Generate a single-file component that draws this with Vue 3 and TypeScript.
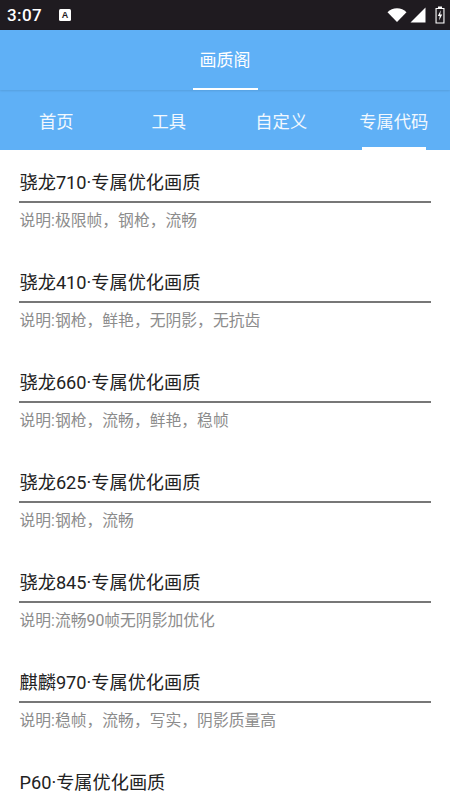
<script setup lang="ts">
const tabs: { label: string; active?: boolean }[] = [
  { label: '首页' },
  { label: '工具' },
  { label: '自定义' },
  { label: '专属代码', active: true },
]
const C = '\uFF0C'
const items = [
  { title: '骁龙710·专属优化画质', desc: ['说明:极限帧', '钢枪', '流畅'].join(C) },
  { title: '骁龙410·专属优化画质', desc: ['说明:钢枪', '鲜艳', '无阴影', '无抗齿'].join(C) },
  { title: '骁龙660·专属优化画质', desc: ['说明:钢枪', '流畅', '鲜艳', '稳帧'].join(C) },
  { title: '骁龙625·专属优化画质', desc: ['说明:钢枪', '流畅'].join(C) },
  { title: '骁龙845·专属优化画质', desc: '说明:流畅90帧无阴影加优化' },
  { title: '麒麟970·专属优化画质', desc: ['说明:稳帧', '流畅', '写实', '阴影质量高'].join(C) },
  { title: 'P60·专属优化画质', desc: '' },
]
</script>

<template>
  <div class="screen">
    <div class="status">
      <span class="time">3:07</span>
      <span class="note">A</span>
      <span class="spacer"></span>
      <svg class="wifi" width="20" height="16" viewBox="0 0 20 16"><path d="M0.5 5.2C3 2.6 6.3 1.2 10 1.2s7 1.4 9.5 4L10 15z" fill="#fff"/></svg>
      <svg class="signal" width="16" height="16" viewBox="0 0 16 16"><path d="M0.5 15.5L15.5 0.5V15.5z" fill="#fff"/></svg>
      <svg class="battery" width="10" height="18" viewBox="0 0 10 18"><path fill-rule="evenodd" d="M3 0.5h4v1.5h2.5v15.5H0.5V2H3zM1.6 3.1v13.3h6.8V3.1z" fill="#fff"/><path d="M5.8 4.2L2.8 10h1.9l-.6 4.4L7.2 8.4H5.2z" fill="#fff"/></svg>
    </div>
    <header class="appbar">
      <div class="app-title">画质阁</div>
    </header>
    <nav class="tabs">
      <div v-for="t in tabs" :key="t.label" class="tab">
        <span>{{ t.label }}</span>
        <i v-if="t.active" class="tab-line"></i>
      </div>
    </nav>
    <main class="list">
      <section v-for="it in items" :key="it.title" class="item">
        <h3 class="title">{{ it.title }}</h3>
        <p class="desc">{{ it.desc }}</p>
      </section>
    </main>
  </div>
</template>

<style>
html, body { margin: 0; background: #fff; overflow: hidden; }
</style>

<style scoped>
.screen {
  width: 450px;
  height: 800px;
  overflow: hidden;
  font-family: "Roboto", "Noto Sans CJK SC", sans-serif;
  background: #fff;
}
.status {
  height: 30px;
  background: #1f1b20;
  display: flex;
  align-items: center;
  padding: 0 5px 0 7px;
  box-sizing: border-box;
  color: #fff;
}
.time { font-size: 17px; font-weight: 500; letter-spacing: .4px; }
.note {
  width: 12px; height: 12px; margin-left: 17px;
  background: #fff; color: #1f1b20; border-radius: 1.5px;
  font: 700 9px/12px "Liberation Sans", sans-serif; text-align: center;
}
.spacer { flex: 1; }
.wifi { margin-right: 3px; }
.signal { margin-right: 9px; }
.appbar {
  height: 60px;
  background: #5fb0f6;
  box-sizing: border-box;
  display: flex;
  justify-content: center;
  box-shadow: 0 1px 2px rgba(0, 0, 0, .1);
  position: relative;
}
.app-title {
  width: 65px;
  height: 60px;
  box-sizing: border-box;
  border-bottom: 2px solid #fff;
  text-align: center;
  color: #fff;
  font-size: 17px;
  line-height: 61px;
}
.tabs {
  height: 60px;
  background: #5fb0f6;
  display: flex;
}
.tab {
  flex: 1;
  position: relative;
  display: flex;
  align-items: center;
  justify-content: center;
  color: #f2f8fe;
  font-size: 17.3px;
}
.tab-line {
  position: absolute;
  left: 50%;
  bottom: 0;
  width: 64px;
  height: 3px;
  margin-left: -32px;
  background: #fff;
}
.list { padding: 0 19px; }
.item { height: 100px; box-sizing: border-box; padding-top: 17px; }
.title {
  margin: 0;
  height: 34px;
  padding-left: 0.5px;
  line-height: 32px;
  font-size: 18.2px;
  font-weight: 400;
  color: #222;
  border-bottom: 2px solid #777;
  box-sizing: content-box;
}
.desc {
  margin: 7px 0 0 0.5px;
  font-size: 15.8px;
  line-height: 22px;
  color: #8c8c8c;
}
</style>
